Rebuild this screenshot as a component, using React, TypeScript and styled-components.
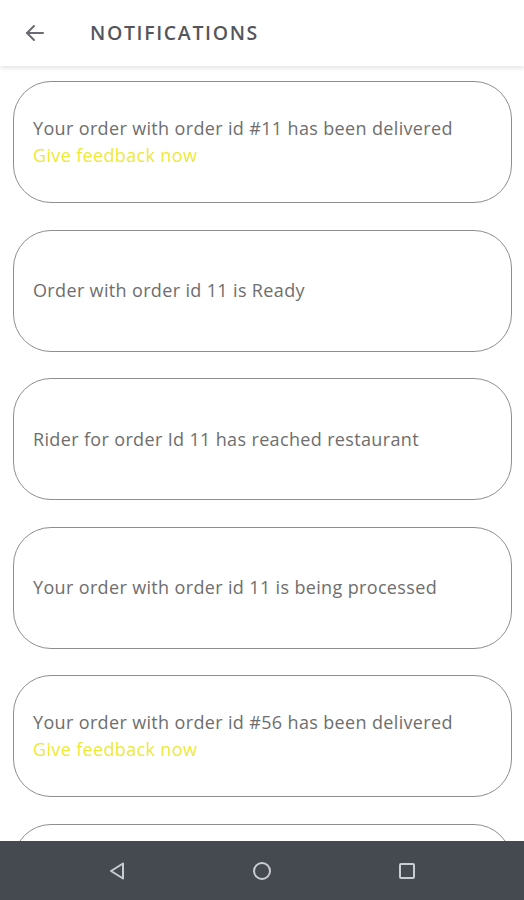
import React from "react";
import styled, { createGlobalStyle } from "styled-components";

const Global = createGlobalStyle`
  html, body { margin: 0; padding: 0; background: #ffffff; }
  body { font-family: "Open Sans", "Lato", sans-serif; }
  * { box-sizing: border-box; }
`;

const Page = styled.div`
  display: flex;
  flex-direction: column;
  width: 524px;
  height: 900px;
  overflow: hidden;
  background: #fff;
`;

const Header = styled.header`
  height: 66px;
  flex: none;
  display: flex;
  align-items: center;
  padding-left: 22px;
  background: #fff;
  box-shadow: 0 2px 5px rgba(0, 0, 0, 0.12);
  position: relative;
  z-index: 1;
`;

const BackButton = styled.button`
  border: none;
  background: none;
  padding: 0;
  width: 26px;
  height: 26px;
  display: flex;
  align-items: center;
  justify-content: center;
  color: #6a6b72;
`;

const Title = styled.h1`
  margin: -2px 0 0 42px;
  font-size: 19.5px;
  font-weight: 600;
  letter-spacing: 1.65px;
  color: #55565c;
`;

const List = styled.div`
  flex: 1;
  overflow: hidden;
  display: flex;
  flex-direction: column;
  gap: 26.5px;
  padding: 15px 12px 0 13px;
`;

const Card = styled.div`
  flex: none;
  height: 122px;
  border: 1.5px solid #8e8e8e;
  border-radius: 38px;
  display: flex;
  flex-direction: column;
  justify-content: center;
  padding: 0 19px;
`;

const Message = styled.div`
  font-size: 18px;
  letter-spacing: 0.35px;
  line-height: 27px;
  color: #6e6e6e;
`;

const Feedback = styled.div`
  font-size: 18px;
  letter-spacing: 0.35px;
  line-height: 27px;
  color: #ece93a;
`;

const NavBar = styled.nav`
  height: 59px;
  flex: none;
  background: #454a50;
  display: flex;
  align-items: center;
  justify-content: center;
  gap: 123px;
`;

const NavIcon = styled.svg`
  width: 22px;
  height: 22px;
  color: #c9ccd0;
`;

const items = [
  { text: "Your order with order id #11 has been delivered", feedback: true },
  { text: "Order with order id 11 is Ready", feedback: false },
  { text: "Rider for order Id 11 has reached restaurant", feedback: false },
  { text: "Your order with order id 11 is being processed", feedback: false },
  { text: "Your order with order id #56 has been delivered", feedback: true },
  { text: "", feedback: false },
];

export default function App() {
  return (
    <Page>
      <Global />
      <Header>
        <BackButton aria-label="back">
          <svg width="24" height="24" viewBox="0 0 24 24" fill="none" stroke="currentColor" strokeWidth="2" strokeLinecap="round" strokeLinejoin="round">
            <path d="M20 12H4" />
            <path d="M11 5l-7 7 7 7" />
          </svg>
        </BackButton>
        <Title>NOTIFICATIONS</Title>
      </Header>
      <List>
        {items.map((it, i) => (
          <Card key={i}>
            {it.text && <Message>{it.text}</Message>}
            {it.feedback && <Feedback>Give feedback now</Feedback>}
          </Card>
        ))}
      </List>
      <NavBar>
        <NavIcon viewBox="0 0 22 22" fill="none" stroke="currentColor" strokeWidth="2" strokeLinejoin="round">
          <path d="M17 3.5 L5 11 L17 18.5 Z" />
        </NavIcon>
        <NavIcon viewBox="0 0 22 22" fill="none" stroke="currentColor" strokeWidth="2">
          <circle cx="11" cy="11" r="8" />
        </NavIcon>
        <NavIcon viewBox="0 0 22 22" fill="none" stroke="currentColor" strokeWidth="2" strokeLinejoin="round">
          <rect x="4" y="4" width="14" height="14" rx="1" />
        </NavIcon>
      </NavBar>
    </Page>
  );
}
